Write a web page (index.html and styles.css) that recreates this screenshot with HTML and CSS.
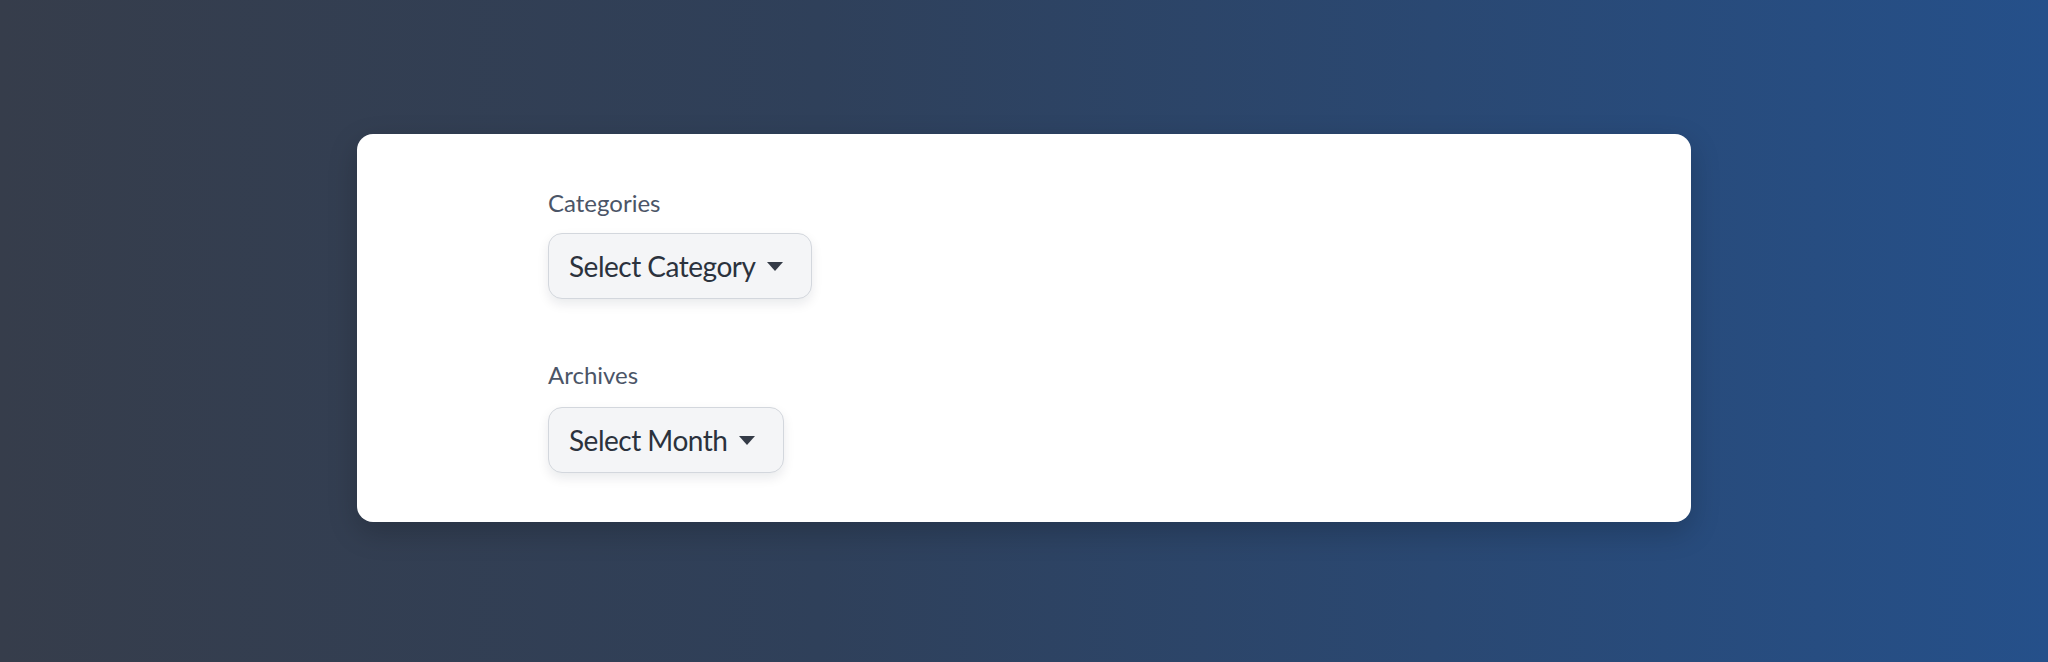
FILE: index.html
```html
<!DOCTYPE html>
<html lang="en">
<head>
<meta charset="utf-8">
<title>Widgets</title>
<link rel="stylesheet" href="styles.css">
</head>
<body>
<main class="card">
  <div class="inner">
    <section class="group">
      <label class="label">Categories</label>
      <button class="select" type="button"><span class="select-text">Select Category</span><span class="caret"></span></button>
    </section>
    <section class="group group-second">
      <label class="label">Archives</label>
      <button class="select select-second" type="button"><span class="select-text">Select Month</span><span class="caret"></span></button>
    </section>
  </div>
</main>
</body>
</html>
```

FILE: styles.css
```css
html, body {
  margin: 0;
  padding: 0;
}
body {
  width: 2048px;
  height: 662px;
  background: linear-gradient(to right, #363d4b 0%, #2f405a 40%, #25508a 100%);
  font-family: Lato, "Noto Sans", sans-serif;
  display: flex;
  align-items: center;
  justify-content: center;
}
.card {
  box-sizing: border-box;
  width: 1334px;
  background: #ffffff;
  border-radius: 16px;
  box-shadow: 0 10px 30px rgba(0, 0, 0, 0.2);
  padding: 53px 191px 49px;
  margin-top: -7px;
}
.inner {
  display: flex;
  flex-direction: column;
}
.group {
  display: flex;
  flex-direction: column;
  align-items: flex-start;
}
.group-second {
  margin-top: 60px;
}
.label {
  font-size: 24px;
  line-height: 32px;
  color: #4b5567;
  margin-bottom: 14px;
}
.group-second .label {
  margin-bottom: 16px;
}
.select {
  box-sizing: border-box;
  height: 66px;
  display: flex;
  align-items: center;
  gap: 12px;
  padding: 0 28px 0 20px;
  background: #f4f5f7;
  border: 1px solid #d3d7dd;
  border-radius: 14px;
  box-shadow: 0 5px 12px rgba(15, 23, 42, 0.09);
  font-family: inherit;
  font-size: 28px;
  letter-spacing: -0.5px;
  color: #2b323d;
  cursor: pointer;
}
.select-text {
  line-height: 36px;
}
.caret {
  width: 0;
  height: 0;
  border-left: 8px solid transparent;
  border-right: 8px solid transparent;
  border-top: 9px solid #343b47;
  margin-top: 1px;
}
```
